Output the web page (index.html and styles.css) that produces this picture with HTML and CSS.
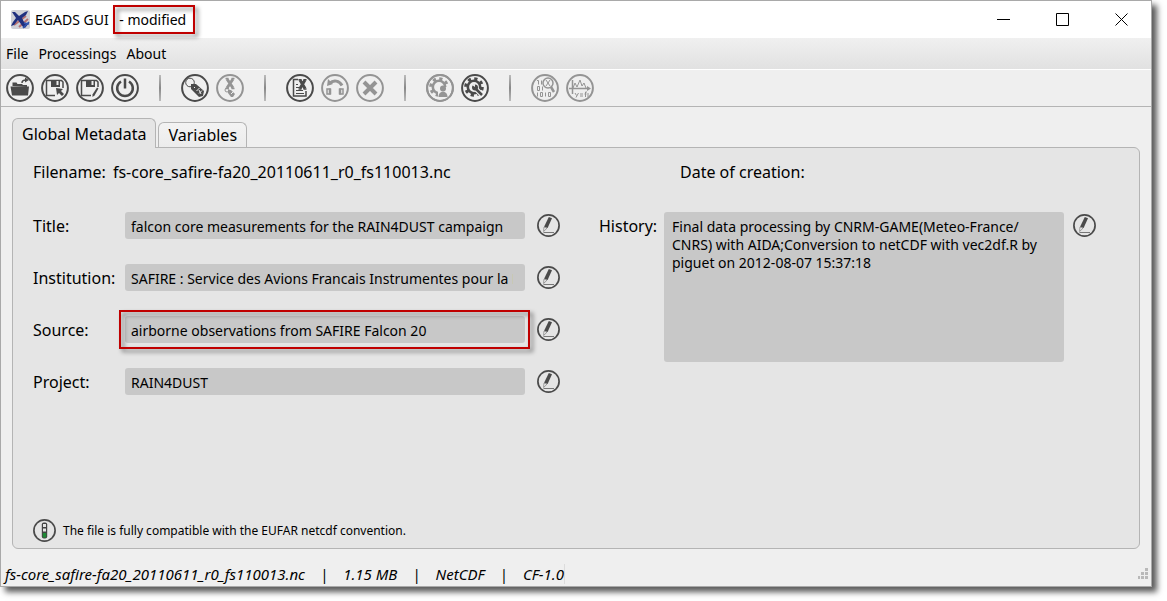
FILE: index.html
```html
<!DOCTYPE html>
<html lang="en">
<head>
<meta charset="utf-8">
<title>EGADS GUI - modified</title>
<link rel="stylesheet" href="styles.css">
</head>
<body>
<svg class="defs" aria-hidden="true">
  <symbol id="pencil" viewBox="0 0 23 23">
    <circle cx="11.500" cy="11.500" r="10.600" fill="none" stroke="#4a4a4a" stroke-width="1.700"/>
    <path d="M11.800 3l3.200 1.300-4.400 9.800-3.500-1.300z" fill="#4a4a4a"/>
    <path d="M7 13l-.4 4.500 3.300-3.200z" fill="#eee" stroke="#777" stroke-width=".7"/>
    <path d="M6.500 18.500h10.500" stroke="#777" stroke-width="1"/>
  </symbol>
  <symbol id="gear" viewBox="0 0 28 28">
    <circle cx="13" cy="13" r="6.200" fill="none" stroke="currentColor" stroke-width="2.600"/>
    <circle cx="13" cy="13" r="8.300" fill="none" stroke="currentColor" stroke-width="3" stroke-dasharray="3.200 3.318"/>
  </symbol>
</svg>
<div class="window">
  <header class="titlebar">
    <svg class="app-icon" viewBox="0 0 19 19" aria-hidden="true">
      <rect width="19" height="19" rx="2" fill="#cfd0d6"/>
      <path d="M3 15L15 6M8 17l9-8" stroke="#b77070" stroke-width="2"/>
      <path d="M1 2l3 0 4 4 6-4 3-1-2 4-4 3 3 6 4-1-4 5-2-1-5-7-4 5-3 1 2-4 3-4z" fill="#20307f"/>
      <path d="M12 18l6-6M13 13l5 1" stroke="#3154b0" stroke-width="1.500"/>
    </svg>
    <h1 class="title">EGADS GUI <span class="marked marked-title">- modified</span></h1>
    <div class="window-buttons">
      <button type="button" aria-label="Minimize"><svg viewBox="0 0 13 13"><path d="M0 6.500h13"/></svg></button>
      <button type="button" aria-label="Maximize"><svg viewBox="0 0 13 13"><path d="M.5.5h12v12H.5z"/></svg></button>
      <button type="button" aria-label="Close"><svg viewBox="0 0 13 13"><path d="M.5.5l12 12M12.500.5l-12 12"/></svg></button>
    </div>
  </header>
  <nav class="menubar">
    <button type="button">File</button>
    <button type="button">Processings</button>
    <button type="button">About</button>
  </nav>
  <div class="toolbar" role="toolbar" aria-label="Main tools">
    <button type="button" aria-label="Open file"><svg viewBox="0 0 28 28"><circle class="ring" cx="14" cy="14" r="12.900"/><path class="solid" d="M4.500 12.500h18.500l-1 9H6zM6.500 12V8.500h4l1 1.500h5v1H21v1.500z"/><path class="line" d="M16 9c0-2 1.500-3 4-3"/><path class="solid" d="M19 3.500l4 2.500-4 2.500z"/></svg></button>
    <button type="button" aria-label="Save file"><svg viewBox="0 0 28 28"><circle class="ring" cx="14" cy="14" r="12.900"/><path class="line" d="M14 21.500H5.500v-15h15l1.500 1.500v6"/><path class="solid" d="M10 6h9v7h-9z"/><path class="hole" d="M15.500 7h2v4h-2z"/><path class="solid" d="M15 14l7 1-2 2 3 3-2 2-3-3-2 2z"/></svg></button>
    <button type="button" aria-label="Save file as"><svg viewBox="0 0 28 28"><circle class="ring" cx="14" cy="14" r="12.900"/><path class="line" d="M15 21.500H5.500v-15h15l1.500 1.500v5"/><path class="solid" d="M10 6h9v7h-9z"/><path class="hole" d="M15.500 7h2v4h-2z"/><path class="solid" d="M21 13.500l1.500 1-4 7-2 1.500v-2.500z"/></svg></button>
    <button type="button" aria-label="Quit"><svg viewBox="0 0 28 28"><circle class="ring" cx="14" cy="14" r="12.900"/><path class="thick" d="M10 7.500a7.800 7.800 0 1 0 8 0M14 4.500v10"/></svg></button>
    <span class="separator"></span>
    <button type="button" aria-label="Add attribute"><svg viewBox="0 0 28 28"><circle class="ring" cx="14" cy="14" r="12.900"/><circle class="thin" cx="9" cy="8.500" r="4.300"/><path class="solid" d="M10 10l5 0 8 7-1 5-4 1-8-8z"/><path class="hole-line" d="M13 13l1 1M15.500 17l3-3M18 19.500l3-3M18 16l2 4"/></svg></button>
    <button type="button" disabled aria-label="Delete attribute"><svg viewBox="0 0 28 28"><circle class="ring" cx="14" cy="14" r="12.900"/><path class="cross" d="M11 5l6 9M17 5l-6 9"/><path class="line" d="M9.500 4.500h3M15.500 4.500h3M9.500 14.500h3M15.500 14.500h3"/><circle class="thin" cx="11" cy="16" r="2"/><path class="solid" d="M12 16l3 0 4 4-2 3-2 0-3-4z"/><path class="hole-line" d="M15 20l2-2"/></svg></button>
    <span class="separator"></span>
    <button type="button" aria-label="Delete metadata"><svg viewBox="0 0 28 28"><circle class="ring" cx="14" cy="14" r="12.900"/><path class="line" d="M12 5.500H7.500v16.500h12.500V17"/><path class="thin" d="M10 10.500h2M10 13.500h3M10 16.500h7M10 19.500h8"/><path class="cross" d="M14 6l5 8.500M19 6l-5 8.500"/><path class="line" d="M12.500 5.800h3M17.500 5.800h3M12.500 15h3M17.500 15h3"/></svg></button>
    <button type="button" disabled aria-label="Migrate variable"><svg viewBox="0 0 28 28"><circle class="ring" cx="14" cy="14" r="12.900"/><path class="cross" d="M8.500 9.500c4-4 10-3 12.500 2"/><path class="solid" d="M6 12l1-7 5 5z"/><path class="line" d="M6 15h3v5H6zM19 15h3v5h-3z"/><path class="thick" d="M9 14.500v6M19 14.500v6"/></svg></button>
    <button type="button" disabled aria-label="Delete variable"><svg viewBox="0 0 28 28"><circle class="ring" cx="14" cy="14" r="12.900"/><path class="heavy" d="M8 8l12 12M20 8L8 20"/></svg></button>
    <span class="separator"></span>
    <button type="button" disabled aria-label="Create algorithm"><svg viewBox="0 0 28 28"><circle class="ring" cx="14" cy="14" r="12.900"/><use href="#gear"/><path class="hole" d="M12 13h12v12H12z"/><circle class="solid" cx="17" cy="14.500" r="3"/><path class="solid" d="M12.500 23c0-7 9-7 9 0z"/><circle class="ring" cx="14" cy="14" r="12.900"/></svg></button>
    <button type="button" aria-label="Process file"><svg viewBox="0 0 28 28"><circle class="ring" cx="14" cy="14" r="12.900"/><use href="#gear"/><path class="hole-wide" d="M14 14l7 7"/><path class="thick" d="M14 14l7 7"/><circle class="solid" cx="14" cy="13.500" r="3"/><path class="hole" d="M11 11l3-1v3z"/></svg></button>
    <span class="separator"></span>
    <button type="button" disabled aria-label="Display data"><svg viewBox="0 0 28 28"><circle class="ring" cx="14" cy="14" r="12.900"/><path class="thin" d="M6 6.500h1.500v4M10.500 6.500v4M6.500 12.500h2v4h-2zM11.500 12.500v4M6.500 18.500v4M9.500 18.500h2v4h-2zM14.500 18.500v4M17.500 18.500h2v4h-2z"/><circle class="line" cx="17" cy="9" r="5"/><path class="thin" d="M15 6l4 6M19 6l-4 6"/><path class="thick" d="M20 13l3 5"/></svg></button>
    <button type="button" disabled aria-label="Plot data"><svg viewBox="0 0 28 28"><circle class="ring" cx="14" cy="14" r="12.900"/><path class="line" d="M6.500 6v14M3 14.500h20"/><path class="solid" d="M21 12l4 2.500-4 2.500z"/><path class="thin" d="M7 14l2-5 2 4 3-7 2 6 2-3 2 5M9 19l1.500 2.500M12.500 19l-2.500 4.500M14 20h3M14 22h3M21 18h-1.500v5M18.500 20h2M22 19v4"/></svg></button>
  </div>
  <main class="content">
    <div class="tabs" role="tablist">
      <button type="button" class="tab tab-active" role="tab" aria-selected="true">Global Metadata</button>
      <button type="button" class="tab" role="tab" aria-selected="false">Variables</button>
    </div>
    <section class="panel" role="tabpanel">
      <div class="summary">
        <p>Filename: <span class="filename">fs-core_safire-fa20_20110611_r0_fs110013.nc</span></p>
        <p>Date of creation:</p>
      </div>
      <form class="form">
        <div class="fields">
          <div class="field"><label for="f-title">Title:</label><input id="f-title" readonly value="falcon core measurements for the RAIN4DUST campaign"><button type="button" class="edit" aria-label="Edit title"><svg><use href="#pencil"/></svg></button></div>
          <div class="field"><label for="f-inst">Institution:</label><input id="f-inst" readonly value="SAFIRE : Service des Avions Francais Instrumentes pour la Recherche"><button type="button" class="edit" aria-label="Edit institution"><svg><use href="#pencil"/></svg></button></div>
          <div class="field"><label for="f-source">Source:</label><span class="marked marked-field"><input id="f-source" readonly value="airborne observations from SAFIRE Falcon 20"></span><button type="button" class="edit" aria-label="Edit source"><svg><use href="#pencil"/></svg></button></div>
          <div class="field"><label for="f-project">Project:</label><input id="f-project" readonly value="RAIN4DUST"><button type="button" class="edit" aria-label="Edit project"><svg><use href="#pencil"/></svg></button></div>
        </div>
        <div class="history">
          <label for="f-history">History:</label>
          <textarea id="f-history" readonly>Final data processing by CNRM-GAME(Meteo-France/
CNRS) with AIDA;Conversion to netCDF with vec2df.R by
piguet on 2012-08-07 15:37:18</textarea>
          <button type="button" class="edit" aria-label="Edit history"><svg><use href="#pencil"/></svg></button>
        </div>
      </form>
      <p class="notice">
        <svg viewBox="0 0 23 23" aria-hidden="true"><circle cx="11.500" cy="11.500" r="10.600" fill="none" stroke="#4a4a4a" stroke-width="1.700"/><rect x="8.800" y="3.500" width="5.400" height="16" rx="2" fill="#444"/><path d="M10 5h3v3h-3zM10 9.500h3v3h-3z" fill="#e5e5e5"/><path d="M9.800 14h3.400v4.500H9.800z" fill="#1e8a35"/></svg>
        The file is fully compatible with the EUFAR netcdf convention.
      </p>
    </section>
  </main>
  <footer class="statusbar">
    <div class="status">
      <span>fs-core_safire-fa20_20110611_r0_fs110013.nc</span><span>|</span><span>1.15 MB</span><span>|</span><span>NetCDF</span><span>|</span><span>CF-1.0</span>
    </div>
    <svg class="grip" viewBox="0 0 10 11" aria-hidden="true"><path d="M7 0h3v3H7zM3 4h3v3H3zM7 4h3v3H7zM0 8h2v3H0zM3 8h3v3H3zM7 8h3v3H7z" fill="#b9b9b9"/></svg>
  </footer>
</div>
</body>
</html>
```
FILE: styles.css
```css
* { box-sizing: border-box; }

body {
  margin: 0;
  min-height: 100vh;
  display: flex;
  padding: 0 15px 14px 0;
  background: #fff;
  color: #000;
  font: 16px/20px "Noto Sans", sans-serif;
}

.defs { position: absolute; width: 0; height: 0; }

button, input, textarea { font: inherit; color: inherit; }
button { border: 0; padding: 0; background: none; }
p, h1 { margin: 0; font-weight: normal; }

.window {
  flex: 1;
  display: flex;
  flex-direction: column;
  border: 1px solid #a9a9a9;
  background: #efefef;
  box-shadow: 5px 5px 6px rgba(0, 0, 0, .65);
}

.titlebar {
  display: flex;
  align-items: center;
  height: 37px;
  padding-left: 10px;
  background: #fff;
}
.app-icon { width: 19px; height: 19px; margin-right: 5px; }
.title { flex: 1; font-size: 14px; }
.window-buttons { display: flex; }
.window-buttons button { width: 59px; height: 37px; }
.window-buttons svg { width: 13px; height: 13px; fill: none; stroke: #000; stroke-width: 1; }

.marked { position: relative; }
.marked::after {
  content: "";
  position: absolute;
  border: 2px solid #c00000;
  filter: drop-shadow(3px 3px 2px rgba(0, 0, 0, .5));
  pointer-events: none;
}
.marked-title { margin-left: 7px; }
.marked-title::after { inset: -5px -9px -5px -6px; }
.marked-field::after { inset: -6px -5px -6px -6px; }

.menubar {
  display: flex;
  gap: 10px;
  height: 32px;
  padding-left: 5px;
  border-bottom: 1px solid #fff;
  background: linear-gradient(#f0f0f0, #e1e1e1);
  font-size: 14px;
}

.toolbar {
  display: flex;
  align-items: center;
  gap: 7px;
  height: 37px;
  padding-left: 5px;
  border-bottom: 1px solid #b4b4b4;
}
.toolbar button { width: 28px; height: 28px; color: #4a4a4a; }
.toolbar button:disabled { color: #949494; }
.toolbar svg { display: block; width: 28px; height: 28px; fill: none; stroke: none; }
.separator { width: 28px; height: 26px; background: linear-gradient(#bbb, #888, #bbb) center / 2px 100% no-repeat; }
.ring { stroke: currentColor; stroke-width: 2; }
.thin { stroke: currentColor; stroke-width: 1; }
.line { stroke: currentColor; stroke-width: 1.5; }
.thick { stroke: currentColor; stroke-width: 2.5; }
.cross { stroke: currentColor; stroke-width: 3; }
.heavy { stroke: currentColor; stroke-width: 4; }
.toolbar .solid { fill: currentColor; }
.toolbar .hole { fill: #efefef; }
.hole-line { stroke: #efefef; stroke-width: 1; }
.hole-wide { stroke: #efefef; stroke-width: 5; }

.content {
  flex: 1;
  display: flex;
  flex-direction: column;
  padding: 11px 11px 0;
}
.tabs { display: flex; align-items: flex-end; gap: 2px; }
.tab {
  height: 25px;
  padding: 0 9px;
  border: 1px solid #b4b4b4;
  border-bottom: 0;
  border-radius: 6px 6px 0 0;
  background: linear-gradient(#f3f3f3, #ececec);
}
.tab-active {
  z-index: 1;
  height: 30px;
  margin-bottom: -1px;
  background: #e5e5e5;
}
.panel {
  flex: 1;
  display: flex;
  flex-direction: column;
  padding: 14px 20px 6px;
  border: 1px solid #b4b4b4;
  border-radius: 0 6px 6px 6px;
  background: #e5e5e5;
}
.summary { display: grid; grid-template-columns: 647px 1fr; margin-bottom: 30px; }
.filename { margin-left: 3px; }
.form { display: flex; align-items: flex-start; gap: 39px; }
.fields { display: grid; gap: 25px; }
.field { display: grid; grid-template-columns: 92px 400px 35px; align-items: center; }
.field .edit { margin-left: 12px; }
.field input {
  width: 100%;
  height: 27px;
  padding: 2px 12px 0 6px;
  border: 0;
  border-radius: 3px;
  background: #c8c8c8;
  font-size: 14px;
}
.marked-field { display: block; height: 27px; }
.edit { width: 23px; height: 23px; }
.edit svg { display: block; width: 23px; height: 23px; }
.history { display: grid; grid-template-columns: 65px 400px 32px; align-items: start; }
.history label { padding-top: 4px; }
.history .edit { margin: 2px 0 0 9px; }
.history textarea {
  height: 150px;
  padding: 6px 8px;
  border: 0;
  border-radius: 3px;
  resize: none;
  overflow: hidden;
  background: #c8c8c8;
  font-size: 14px;
  line-height: 18px;
}
.notice { display: flex; align-items: center; gap: 7px; margin-top: auto; font-size: 12px; }
.notice svg { width: 23px; height: 23px; }

.statusbar {
  display: flex;
  align-items: center;
  justify-content: space-between;
  height: 37px;
  padding: 12px 3px 0 4px;
}
.status {
  display: flex;
  gap: 15px;
  border-right: 1px solid #dcdcdc;
  font-size: 15px;
  font-style: italic;
}
.grip { width: 10px; height: 11px; }
```
